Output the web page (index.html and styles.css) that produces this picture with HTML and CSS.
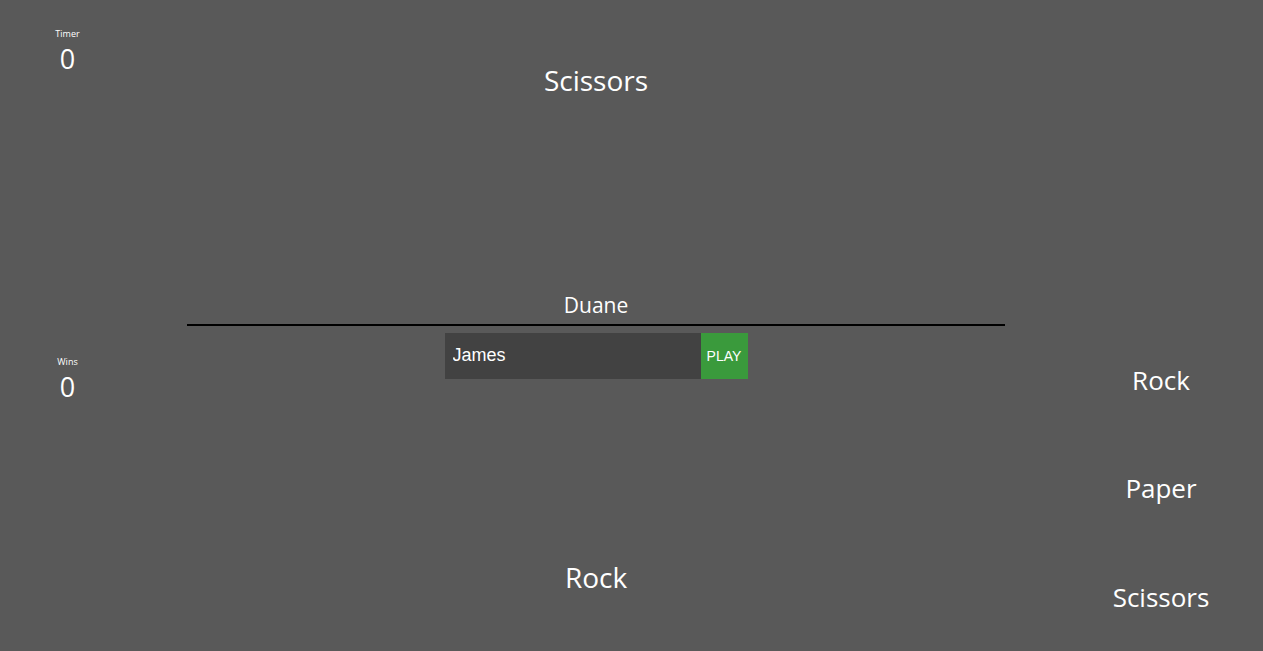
FILE: index.html
```html
<!DOCTYPE html>
<html>
<head>
<meta charset="utf-8">
<link rel="stylesheet" href="styles.css">
</head>
<body>
<div class="game">
  <aside class="stats">
    <div class="stat stat-timer">
      <div class="stat-label">Timer</div>
      <div class="stat-value">0</div>
    </div>
    <div class="stat stat-wins">
      <div class="stat-label">Wins</div>
      <div class="stat-value">0</div>
    </div>
  </aside>
  <main class="board">
    <section class="half opponent">
      <div class="choice">Scissors</div>
      <div class="name">Duane</div>
    </section>
    <section class="half player">
      <form class="name-form">
        <input class="name-input" type="text" value="James">
        <button class="play-btn" type="button">PLAY</button>
      </form>
      <div class="choice">Rock</div>
    </section>
  </main>
  <aside class="options">
    <div class="options-top"></div>
    <div class="options-list">
      <div class="option">Rock</div>
      <div class="option">Paper</div>
      <div class="option">Scissors</div>
    </div>
  </aside>
</div>
</body>
</html>
```
FILE: styles.css
```css
html, body {
  margin: 0;
  padding: 0;
  height: 100%;
}
body {
  background: #595959;
  color: #ffffff;
  font-family: "Open Sans", "Noto Sans", sans-serif;
}
.game {
  display: grid;
  grid-template-columns: 135px 1fr 204px;
  height: 100vh;
}
.stats {
  display: grid;
  grid-template-rows: 1fr 1fr;
  text-align: center;
}
.stat-timer {
  padding-top: 28px;
}
.stat-wins {
  padding-top: 30px;
}
.stat-label {
  font-size: 9px;
  line-height: 12px;
}
.stat-value {
  font-size: 27px;
  line-height: 36px;
  margin-top: 1px;
}
.board {
  display: grid;
  grid-template-rows: 1fr 1fr;
  padding: 0 54px 0 52px;
  text-align: center;
}
.half {
  display: flex;
  flex-direction: column;
  align-items: center;
  justify-content: space-between;
}
.opponent {
  border-bottom: 2px solid #000;
  padding-top: 60px;
  padding-bottom: 4px;
}
.player {
  padding-top: 7px;
  padding-bottom: 54px;
}
.choice {
  font-size: 28px;
  line-height: 40px;
}
.name {
  font-size: 21px;
  line-height: 30px;
}
.name-form {
  display: flex;
  margin: 0;
}
.name-input {
  width: 256px;
  height: 46px;
  box-sizing: border-box;
  border: none;
  outline: none;
  background: #424242;
  color: #fff;
  font-family: "Liberation Sans", Arial, sans-serif;
  font-size: 18px;
  padding: 0 8px;
  margin: 0;
}
.play-btn {
  width: 47px;
  height: 46px;
  border: none;
  background: #3a9a3c;
  color: #fff;
  font-family: "Liberation Sans", Arial, sans-serif;
  font-size: 14px;
  padding: 0;
  margin: 0;
}
.options {
  display: grid;
  grid-template-rows: 1fr 1fr;
}
.options-list {
  display: grid;
  grid-template-rows: 1fr 1fr 1fr;
  text-align: center;
}
.option {
  display: flex;
  align-items: center;
  justify-content: center;
  font-size: 26px;
}
```
